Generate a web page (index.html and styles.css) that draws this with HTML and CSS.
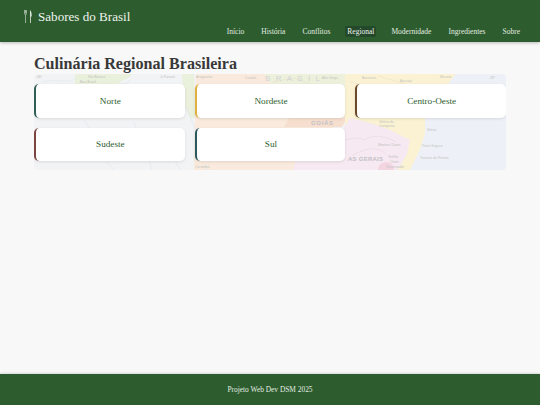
FILE: index.html
```html
<!DOCTYPE html>
<html lang="pt-BR">
<head>
    <meta charset="UTF-8">
    <title>Sabores do Brasil</title>
    <link rel="stylesheet" href="styles.css">
</head>
<body>
    <header class="topbar">
        <div class="brand">
            <svg class="brand-icon" viewBox="0 0 8 13" width="8" height="13" aria-hidden="true">
                <path d="M.5 0v3.500M1.500 0v3.500M2.500 0v3.500M.5 3.500c0 .8.5 1.200 1 1.200s1-.4 1-1.200M1.500 4.700V13" fill="none" stroke="#dfe8de" stroke-width=".6"/>
                <path d="M6 0c1.200 1 1.700 2.800 1.700 6.500H6.800V13H6z" fill="#dfe8de"/>
            </svg>
            <span class="brand-name">Sabores do Brasil</span>
        </div>
        <nav class="nav">
            <a href="#">Início</a>
            <a href="#">História</a>
            <a href="#">Conflitos</a>
            <a href="#" class="active">Regional</a>
            <a href="#">Modernidade</a>
            <a href="#">Ingredientes</a>
            <a href="#">Sobre</a>
        </nav>
    </header>

    <main class="content">
        <h1 class="title">Culinária Regional Brasileira</h1>
        <section class="map-area">
            <svg class="map" viewBox="0 0 472 96" preserveAspectRatio="none" aria-hidden="true">
                <rect width="472" height="96" fill="#f2f3f4"/>
                <!-- land -->
                <path d="M41 0H98L94 4L86 8L84 10H41Z" fill="#e9f0dc"/>
                <path d="M148 0H160L161 44H156L150 30Z" fill="#e9f0dc"/>
                <path d="M162 0H236L240 8L290 8L311 0V44L300 53L259 96H160L161 44Z" fill="#f9eadd"/>
                <path d="M230 0H314V14L240 14Z" fill="#edf1db"/>
                <path d="M255 44H313L308 53H250Z" fill="#f7dfcf"/>
                <path d="M311 0H422L405 22L391 44L391 60L386 76L376 96H311Z" fill="#faf2d3"/>
                <path d="M316 44L340 50L356 56L376 66L373 80L364 96H259L262 86H296L310 53Z" fill="#f6e9f1"/>
                <path d="M422 0H472V96H376L386 76L391 60L391 44L405 22Z" fill="#edf1f7"/>
                <circle cx="352" cy="96" r="8" fill="#f3d5e2"/>
                <!-- rivers -->
                <path d="M8 8C20 4 30 10 42 5M96 6C88 14 84 6 80 14M50 46C60 56 56 70 66 82C72 88 76 90 80 96M100 48C104 60 110 70 118 96M150 30C156 40 158 50 164 60M170 90L174 96M128 70C136 76 140 84 146 96" fill="none" stroke="#dfe8ee" stroke-width=".7"/>
                <path d="M300 64C312 70 320 60 330 66M330 66C340 60 352 62 362 68M318 82C330 74 344 72 352 80" fill="none" stroke="#e3d3dd" stroke-width=".5"/>
                <path d="M238 8L260 4L282 12M316 8L344 14M344 2L372 10M196 64L230 58M356 42L372 30" fill="none" stroke="#eadcc8" stroke-width=".5"/>
                <!-- names -->
                <text class="map-region" x="231" y="7" textLength="55">BRASIL</text>
                <text class="map-state" x="277" y="51" textLength="22">GOIÁS</text>
                <text class="map-state" x="314" y="87" textLength="35">AS GERAIS</text>
                <text class="map-city" x="2" y="4">-66°</text>
                <text class="map-city" x="54" y="4">Rio Branco</text>
                <text class="map-city" x="46" y="9">Boa Brasil</text>
                <text class="map-city" x="126" y="4">Ji-Paraná</text>
                <text class="map-city" x="162" y="4">Araguaína</text>
                <text class="map-city" x="211" y="5">Cuiabá</text>
                <text class="map-city" x="288" y="5">Alto Xingu</text>
                <text class="map-city" x="328" y="5">Barreiras</text>
                <text class="map-city" x="366" y="8">Aracaju</text>
                <text class="map-city" x="406" y="4">Maceió</text>
                <text class="map-city" x="455" y="5">-39°</text>
                <text class="map-city" x="206" y="24">da Serra</text>
                <text class="map-city" x="345" y="49">Vitória da</text>
                <text class="map-city" x="345" y="53">Conquista</text>
                <text class="map-city" x="393" y="57">Ilhéus</text>
                <text class="map-city" x="344" y="72">Montes Claros</text>
                <text class="map-city" x="388" y="73">Porto Seguro</text>
                <text class="map-city" x="386" y="85">Teixeira de Freitas</text>
                <text class="map-city" x="354" y="84">Teófilo</text>
                <text class="map-city" x="356" y="89">Otoni</text>
                <text class="map-city" x="352" y="94">Governador</text>
                <text class="map-city" x="161" y="94">Corumbá</text>
            </svg>
            <div class="regions">
                <a href="#" class="region region-norte">Norte</a>
                <a href="#" class="region region-nordeste">Nordeste</a>
                <a href="#" class="region region-centro">Centro-Oeste</a>
                <a href="#" class="region region-sudeste">Sudeste</a>
                <a href="#" class="region region-sul">Sul</a>
            </div>
        </section>
    </main>

    <footer class="footer">Projeto Web Dev DSM 2025</footer>
</body>
</html>
```

FILE: styles.css
```css
*{
	margin: 0;
	padding: 0;
	box-sizing: border-box;
	font-family: "Liberation Serif", "DejaVu Serif", serif;
}

body{
	min-height: 405px;
	display: flex;
	flex-direction: column;
	background-color: #f8f8f8;
	color: #333;
}

.topbar{
	height: 42px;
	padding: 0 18px 0 24px;
	display: flex;
	justify-content: space-between;
	background-color: #2d5d2e;
	box-shadow: 0 1px 3px rgba(0, 0, 0, 0.25);
}

.brand{
	display: flex;
	align-items: center;
	gap: 6px;
	height: 33px;
}
.brand-icon{
	display: block;
}
.brand-name{
	font-size: 13.100px;
	color: #eef3ed;
}

.nav{
	display: flex;
	align-items: flex-end;
	gap: 13px;
	padding-bottom: 5px;
}
.nav a{
	padding: 2px;
	font-size: 7.500px;
	line-height: 7px;
	color: #e3ebe2;
	text-decoration: none;
	border-radius: 2px;
}
.nav a.active{
	background-color: #23482a;
	color: #eef3ed;
}

.content{
	flex: 1;
	padding: 11px 34px 0;
}
.title{
	font-size: 16.100px;
	line-height: 21px;
	font-weight: bold;
	color: #383838;
}

.map-area{
	position: relative;
	height: 96px;
	overflow: hidden;
	border-radius: 4px;
}
.map{
	position: absolute;
	inset: 0;
	width: 100%;
	height: 100%;
}
.map-region{
	font-family: "Liberation Sans", sans-serif;
	font-size: 8px;
	fill: #d3d2d6;
}
.map-state{
	font-family: "Liberation Sans", sans-serif;
	font-size: 6px;
	font-weight: bold;
	fill: #c2c0c5;
}
.map-city{
	font-family: "Liberation Sans", sans-serif;
	font-size: 3.500px;
	fill: #c4c4bf;
}

.regions{
	position: relative;
	display: grid;
	grid-template-columns: repeat(3, 1fr);
	gap: 10px;
	padding-top: 10px;
}
.region{
	height: 33.500px;
	display: flex;
	align-items: center;
	justify-content: center;
	font-size: 9.200px;
	color: #2d5d2e;
	text-decoration: none;
	background-color: #fff;
	border-left: 2px solid #2f5f55;
	border-radius: 5px;
	box-shadow: 0 1px 3px rgba(0, 0, 0, 0.1);
}
.region-nordeste{
	border-left-color: #e0b040;
}
.region-centro{
	border-left-color: #6b4a2a;
}
.region-sudeste{
	border-left-color: #7a4440;
}
.region-sul{
	border-left-color: #2a5a60;
}

.footer{
	height: 31px;
	display: flex;
	align-items: center;
	justify-content: center;
	font-size: 7.400px;
	color: #e3ebe2;
	background-color: #2d5d2e;
	box-shadow: 0 -1px 2px rgba(0, 0, 0, 0.12);
}
```
